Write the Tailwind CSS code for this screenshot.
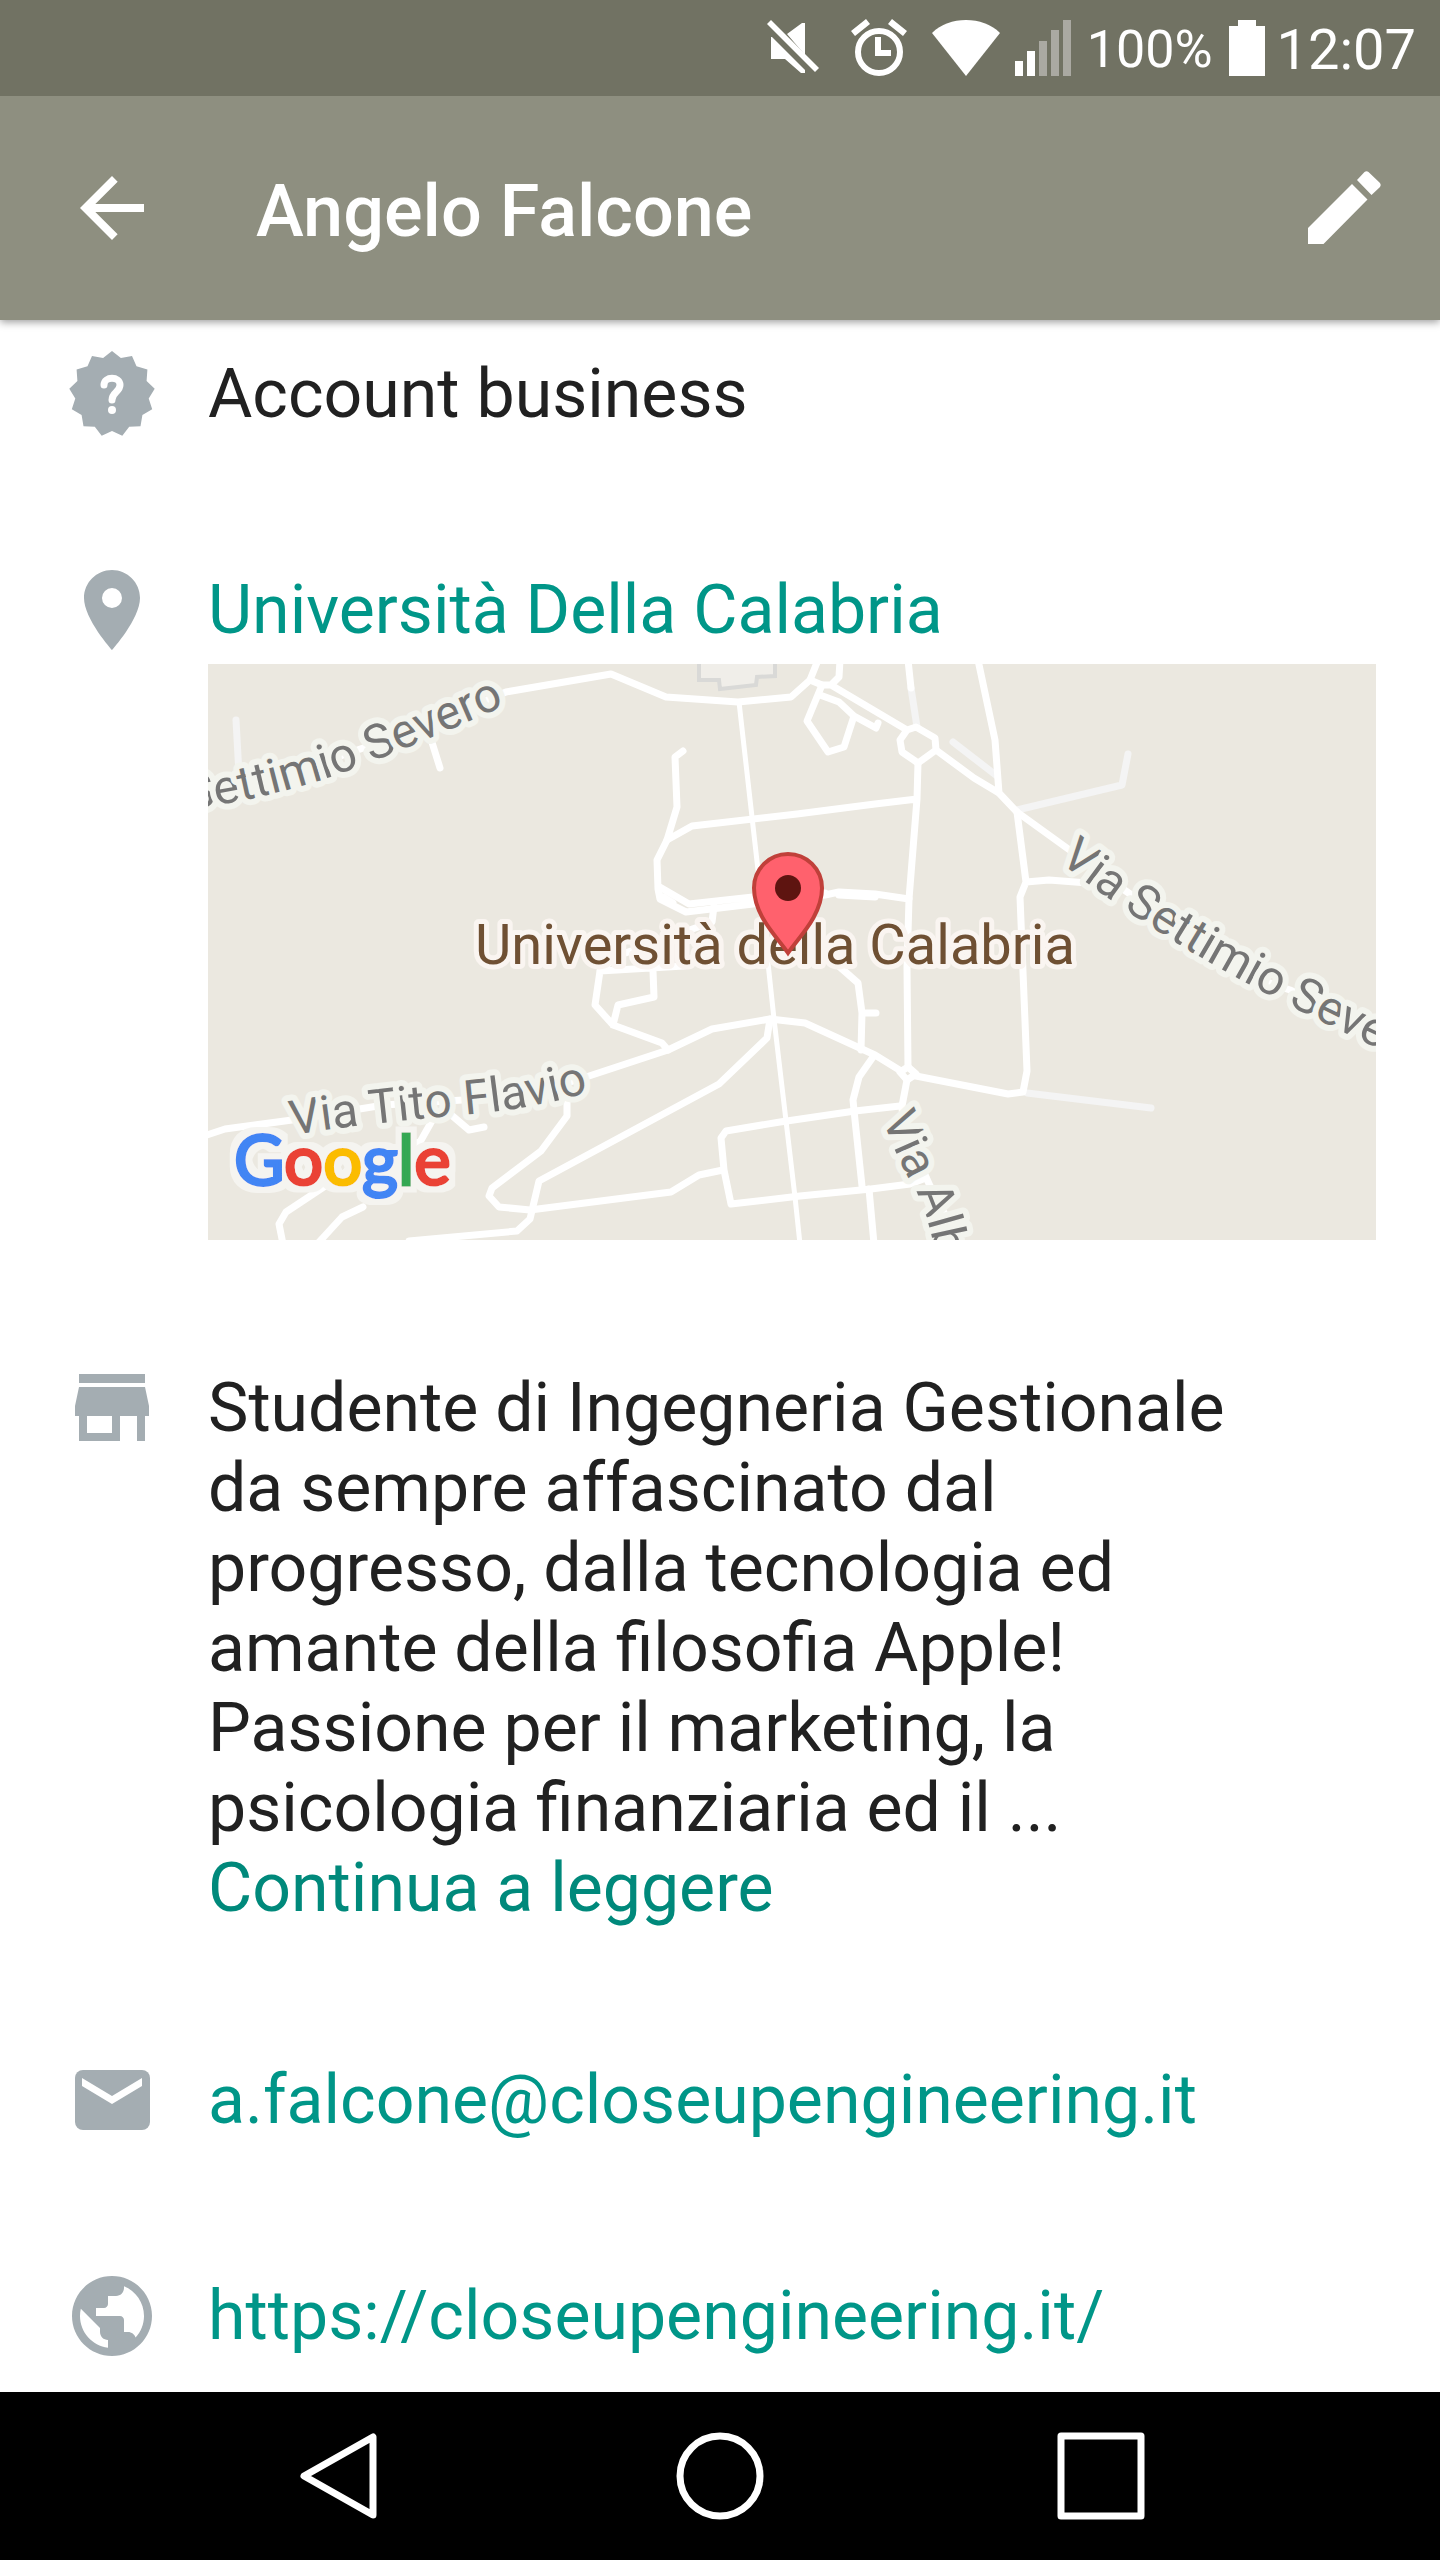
<!DOCTYPE html>
<html lang="it">
<head>
   <meta charset="UTF-8">
   <meta name="viewport" content="width=device-width, initial-scale=1.0">
   <title>Angelo Falcone</title>

   <!-- Tailwind CSS CDN link -->
   <script src="https://cdn.jsdelivr.net/npm/@tailwindcss/browser@4"></script>
</head>
<body class="min-h-screen flex flex-col bg-white text-[#212121] font-[Roboto,'Noto_Sans',sans-serif]">

<!-- Status Bar -->
<div class="relative z-10 h-24 bg-[#717263] text-white flex justify-end items-center pr-6">
   <svg class="w-[52px] h-24" viewBox="0 0 52 96" fill="#fff">
      <path d="M4 37v22h14l16 14h4v-3L5 37zM38 23v32L20 34l15-11z"/>
      <path d="M4 20l48 48-4 4L0 24z"/>
   </svg>
   <svg class="w-14 h-24 ml-8" viewBox="0 0 56 96" fill="#fff">
      <circle cx="28" cy="52" r="21" fill="none" stroke="#fff" stroke-width="6"/>
      <path d="M15 19l4 5L4 36l-4-5zM41 19l15 12-4 5-15-12zM24 37h6v13h10v6H24z"/>
   </svg>
   <svg class="w-[70px] h-24 ml-6" viewBox="0 0 70 96" fill="#fff">
      <path d="M1 33C10 24 22 20 35 20s25 4 34 13L35 76z"/>
   </svg>
   <svg class="w-14 h-24 ml-3.5" viewBox="0 0 56 96" fill="#fff">
      <path d="M0 61h8v15H0zM12 51h8v25h-8z"/>
      <path fill="#aaa9a2" d="M24 41h8v35h-8zM36 30h8v46h-8zM48 20h8v56h-8z"/>
   </svg>
   <span class="ml-4 pt-1 text-[52px] leading-[60px]">100%</span>
   <svg class="w-9 h-24 ml-4" viewBox="0 0 36 96" fill="#fff">
      <path d="M9 20h18v6h9v50H0V26h9z"/>
   </svg>
   <span class="ml-3 pt-1 text-[56px] leading-[60px]">12:07</span>
</div>

<!-- Header Section -->
<header class="h-56 bg-[#8e8f80] text-white flex items-center pl-16 pr-12 shadow-[0_2px_8px_rgba(0,0,0,0.4)]">
   <button type="button" aria-label="Indietro" class="size-24">
      <svg class="size-24" viewBox="0 0 24 24" fill="#fff"><path d="M20 11H7.83l5.59-5.59L12 4l-8 8 8 8 1.41-1.41L7.83 13H20z"/></svg>
   </button>
   <h1 class="flex-1 pl-24 pt-2 text-[72px] leading-[84px] font-medium">Angelo Falcone</h1>
   <button type="button" aria-label="Modifica" class="size-24">
      <svg class="size-24" viewBox="0 0 96 96" fill="#fff">
         <path d="M12 68v16h15.500L71.500 39.500 56 24zM61 20l7.500-8q2-1.500 4 0L84 23q1.500 2 0 4l-8.500 8z"/>
      </svg>
   </button>
</header>

<!-- Business Profile -->
<main class="flex-1 pt-[26px] pb-7 pl-16 pr-16 text-[68px] leading-[80px]">

   <section class="flex gap-12 mb-[120px]">
      <svg class="size-24 shrink-0" viewBox="0 0 96 96">
         <polygon fill="#a4adb2" points="48,5 56.900,12.100 68,9.900 72.500,20.300 83.400,23.600 82.600,34.900 90.700,42.800 84.700,52.500 88.200,63.200 78.400,69 76.500,80.200 65.200,80.800 58.300,89.700 48,85 37.700,89.700 30.800,80.800 19.500,80.200 17.600,69 7.800,63.200 11.300,52.500 5.300,42.800 13.400,34.900 12.600,23.600 23.500,20.300 28,9.900 39.100,12.100"/>
         <path d="M40 39c0-9 16-9 16 0 0 7-8 7-8 15" fill="none" stroke="#fff" stroke-width="7" stroke-linecap="round"/>
         <circle cx="48" cy="64" r="4" fill="#fff"/>
      </svg>
      <p class="py-2">Account business</p>
   </section>

   <section class="flex gap-12 mb-[120px]">
      <svg class="size-24 shrink-0" viewBox="0 0 24 24" fill="#a4adb2"><path d="M12 2C8.130 2 5 5.130 5 9c0 5.250 7 13 7 13s7-7.750 7-13c0-3.870-3.130-7-7-7zm0 9.500a2.500 2.500 0 1 1 0-5 2.500 2.500 0 0 1 0 5z"/></svg>
      <div class="flex-1 pt-2">
         <a href="#" class="text-[#009688]">Università Della Calabria</a>
         <!-- Map -->
         <svg class="block w-full mt-[14px] bg-[#ebe8e0]" viewBox="0 0 1168 576" role="img" aria-label="Mappa">
            <path d="M491-4v20h20l1 9 36-4 1-8 18-1V-4" fill="#f0eee9" stroke="#d9d9d7" stroke-width="4"/>
            <g fill="none" stroke="#f4f4f4" stroke-width="7" stroke-linecap="round" stroke-linejoin="round">
               <path d="M28 56l3 54M703 24l6 39M745 78l44 34M809 146l105-25 6-31M819 429l124 15"/>
            </g>
            <g fill="none" stroke="#fff" stroke-width="7" stroke-linecap="round" stroke-linejoin="round">
               <path d="M-4 126L118 97 218 62 298 28 403 10 458 33 530 38 583 33 602 16 610-4"/>
               <path d="M602 16l12 5h9l8-8 1-17M623 21l76 45M708 63l19 11 1 12-18 13-16-11-2-12 7-10z"/>
               <path d="M614 21l-15 36 21 31 16-5 10-31-15-14-19-7M646 52l22 12 2-5"/>
               <path d="M700-4l3 28M770-4l17 80 4 53M728 86l38 28 25 15 18 19 54 39 49 36 55 38 72 50 43 15 44 21 46 23"/>
               <path d="M710 99l-1 36-8 100-2 68 1 100M459 176l25-14 105-12 78-10 42-5"/>
               <path d="M809 148l9 70-6 15 7 174-4 21-15 2-92-18M818 218l23-2 39 3"/>
               <path d="M475 87l-8 6 2 50-10 33-10 20 1 29 2 10 26 13 67-8 72-9 14-3 36 2 34 5M450 222l31 18 64-7 72-4M455 233l10 6M631 231l36 2"/>
               <path d="M506 242l-2 16-95 34-17 15M476 302l-84 5-5 34 18 20 49 18 6 7M445 307l1 26-36 8-5 20"/>
               <path d="M222 72l10 32M-4 472l21-7 67-9 92-15 141-9 58-18 85-28 44-21 58-10 35 4 70 32 26 16"/>
               <path d="M700 403l8 7-9 6-7-8zM562 355l-3 19-48 46-180 97-9 38-13 12-108 10"/>
               <path d="M359 437v15l-26 35-49 37-3 8 10 11 31 3 141-18 28-17 24-5M241 449l20 17 15-3"/>
               <path d="M225 455l-13 23-48 13-86 57-7 12 4 20M155 543l-21 10-23 25"/>
               <path d="M692 442l-45 5-75 11-54 9-5 7 3 32 7 34 69-8 71-7 39-5 16-6"/>
               <path d="M665 393l-14 20-6 23 2 20 7 66M661 525l5 55M699 416l-5 26 1 18 15 35 12 27 20 38 8 20"/>
               <path d="M625 297l25 22 4 30-1 37M654 349h14"/>
               <path d="M531 38l20 177 15 140 21 178 5 47" stroke-width="5"/>
            </g>

            <!-- Street labels follow the road curves -->
            <defs>
               <path id="severo-ovest" d="M-20 146Q75 132 150 103T316 33"/>
               <path id="severo-est" d="M851 197Q898 236 977 284T1190 394"/>
               <path id="tito" d="M84 471Q150 460 265 450Q332 444 394 424"/>
               <path id="alberto" d="M674 454Q688 492 706 524T732 620"/>
               <filter id="halo" x="-10%" y="-20%" width="120%" height="140%">
                  <feMorphology in="SourceAlpha" operator="dilate" radius="6" result="grow"/>
                  <feFlood flood-color="#f5f4f0"/>
                  <feComposite in2="grow" operator="in"/>
                  <feMerge><feMergeNode/><feMergeNode in="SourceGraphic"/></feMerge>
               </filter>
            </defs>
            <g class="text-[48px]" fill="#757575" stroke="#f3f4ee" stroke-width="12" stroke-linejoin="round" paint-order="stroke">
               <text><textPath href="#severo-ovest">Settimio Severo</textPath></text>
               <text><textPath href="#severo-est">Via Settimio Severo</textPath></text>
               <text><textPath href="#tito">Via Tito Flavio</textPath></text>
               <text><textPath href="#alberto">Via Alb</textPath></text>
            </g>
            <text x="267" y="300" class="text-[56px]" fill="#6f5033" stroke="#faf5f1" stroke-width="10" stroke-linejoin="round" paint-order="stroke">Università della Calabria</text>

            <!-- Marker -->
            <path d="M580 289C570 274 546 252 546 224a34 34 0 0 1 68 0c0 28-24 50-34 65z" fill="#ff616d" stroke="#c0403a" stroke-width="4"/>
            <circle cx="580" cy="224" r="13" fill="#5e1410"/>

            <text x="26" y="521" filter="url(#halo)" class="text-[69px] font-[Lato,sans-serif] stroke-3 fill-[#4285f4] stroke-[#4285f4]">G<tspan class="fill-[#ea4335] stroke-[#ea4335]">o</tspan><tspan class="fill-[#fbbc05] stroke-[#fbbc05]">o</tspan>g<tspan class="fill-[#34a853] stroke-[#34a853]">l</tspan><tspan class="fill-[#ea4335] stroke-[#ea4335]">e</tspan></text>
         </svg>
      </div>
   </section>

   <section class="flex gap-12 mb-[116px]">
      <svg class="size-24 shrink-0" viewBox="0 0 96 96" fill="#a4adb2"><path d="M15 14h66v9H15zM15 27h66l4 19v10h-4v25h-8V56H56v25H15V56h-4V46zM23 56v17h25V56z"/></svg>
      <div class="flex-1 py-2 pr-24">
         <p>Studente di Ingegneria Gestionale da sempre affascinato dal progresso, dalla tecnologia ed amante della filosofia Apple! Passione per il marketing, la psicologia finanziaria ed il ...</p>
         <button type="button" class="block text-[#00897b]">Continua a leggere</button>
      </div>
   </section>

   <section class="flex gap-12 mb-[120px]">
      <svg class="size-24 shrink-0" viewBox="0 0 96 96">
         <rect x="11" y="18" width="75" height="60" rx="8" fill="#a4adb2"/>
         <path d="M18 26l30 18 30-18v8L48 52 18 34z" fill="#fff"/>
      </svg>
      <a href="mailto:a.falcone@closeupengineering.it" class="py-2 text-[#009688]">a.falcone@closeupengineering.it</a>
   </section>

   <section class="flex gap-12">
      <svg class="size-24 shrink-0" viewBox="0 0 24 24" fill="#a4adb2"><path d="M12 2C6.480 2 2 6.480 2 12s4.480 10 10 10 10-4.480 10-10S17.520 2 12 2zm-1 17.930c-3.950-.49-7-3.850-7-7.930 0-.62.08-1.210.21-1.790L9 15v1c0 1.100.9 2 2 2v1.930zm6.900-2.540c-.26-.81-1-1.390-1.900-1.390h-1v-3c0-.55-.45-1-1-1H8v-2h2c.55 0 1-.45 1-1V7h2c1.100 0 2-.9 2-2v-.41c2.930 1.190 5 4.060 5 7.410 0 2.080-.8 3.970-2.100 5.390z"/></svg>
      <a href="https://closeupengineering.it/" class="py-2 text-[#009688]">https://closeupengineering.it/</a>
   </section>

</main>

<!-- Navigation Bar -->
<nav class="h-[168px] bg-black grid grid-cols-3 items-center justify-items-center px-[148px]">
   <button type="button" aria-label="Indietro" class="size-24">
      <svg class="size-24" viewBox="0 0 96 96" fill="none" stroke="#fff" stroke-width="7" stroke-linejoin="round"><path d="M82 9v78L13 48z"/></svg>
   </button>
   <button type="button" aria-label="Home" class="size-24">
      <svg class="size-24" viewBox="0 0 96 96" fill="none" stroke="#fff" stroke-width="7"><circle cx="48" cy="48" r="40"/></svg>
   </button>
   <button type="button" aria-label="App recenti" class="size-24">
      <svg class="size-24" viewBox="0 0 96 96" fill="none" stroke="#fff" stroke-width="7" stroke-linejoin="round"><path d="M8 8h80v80H8z"/></svg>
   </button>
</nav>

</body>
</html>
